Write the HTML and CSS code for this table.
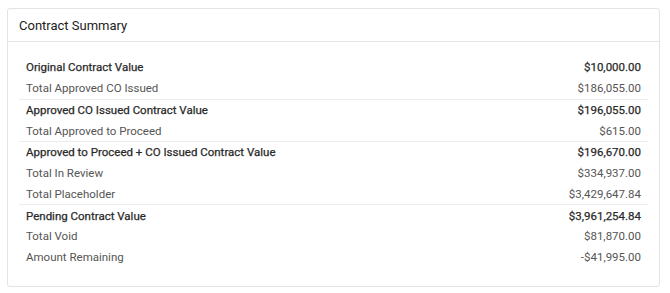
FILE: index.html
```html
<!DOCTYPE html>
<html>
<head>
<meta charset="utf-8">
<link rel="stylesheet" href="styles.css">
</head>
<body>
<div class="card">
  <div class="card-header">Contract Summary</div>
  <div class="card-body">
    <div class="group">
      <div class="row strong"><span>Original Contract Value</span><span>$10,000.00</span></div>
      <div class="row"><span>Total Approved CO Issued</span><span>$186,055.00</span></div>
    </div>
    <div class="group">
      <div class="row strong"><span>Approved CO Issued Contract Value</span><span>$196,055.00</span></div>
      <div class="row"><span>Total Approved to Proceed</span><span>$615.00</span></div>
    </div>
    <div class="group">
      <div class="row strong"><span>Approved to Proceed + CO Issued Contract Value</span><span>$196,670.00</span></div>
      <div class="row"><span>Total In Review</span><span>$334,937.00</span></div>
      <div class="row"><span>Total Placeholder</span><span>$3,429,647.84</span></div>
    </div>
    <div class="group">
      <div class="row strong"><span>Pending Contract Value</span><span>$3,961,254.84</span></div>
      <div class="row"><span>Total Void</span><span>$81,870.00</span></div>
      <div class="row"><span>Amount Remaining</span><span>-$41,995.00</span></div>
    </div>
  </div>
</div>
</body>
</html>
```

FILE: styles.css
```css
html, body {
  margin: 0;
  padding: 0;
  background: #ffffff;
}
body {
  padding: 8px 10px 6px 7px;
  font-family: Roboto, "Liberation Sans", sans-serif;
}
.card {
  border: 1px solid #e3e3e3;
  border-radius: 3px;
  background: #fff;
}
.card-header {
  height: 33px;
  box-sizing: border-box;
  padding: 0 11px;
  display: flex;
  align-items: center;
  font-size: 13px;
  color: #222;
  border-bottom: 1px solid #e6e6e6;
}
.card-body {
  padding: 15px 11px 18px 11px;
}
.group + .group {
  border-top: 1px solid #ececec;
}
.row {
  display: flex;
  justify-content: space-between;
  align-items: center;
  height: 20.75px;
  padding: 0 7px;
  font-size: 11.5px;
  color: #555;
}
.row.strong {
  font-weight: 400;
  color: #2a2a2a;
  -webkit-text-stroke: 0.25px #2a2a2a;
}
```
